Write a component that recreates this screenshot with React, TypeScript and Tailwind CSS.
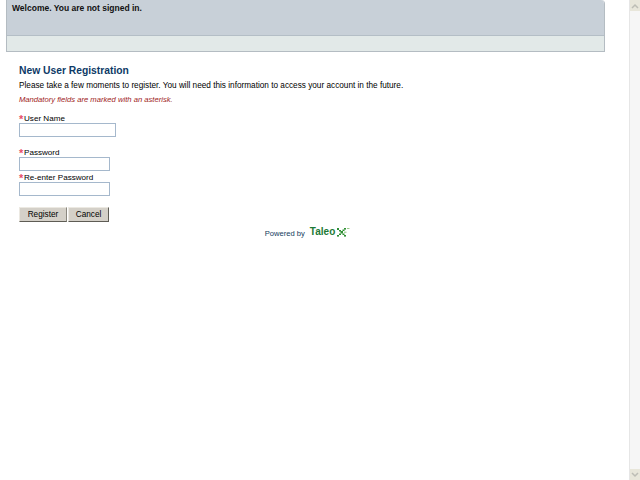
export default function App() {
  const input = "block h-[14px] border border-[#a5b8cc] bg-white";
  const label = "flex h-[10px] items-center pt-[2px] text-[8.1px] leading-[10px]";
  const star = <span className="inline-block w-[5px] text-[11px] font-bold leading-[8px] text-[#e8506a]">*</span>;
  return (
    <div className="flex h-[480px] w-[640px] overflow-hidden bg-white font-['Liberation_Sans',Arial,sans-serif] text-[8.23px] leading-[11px] text-black">
      <main className="w-[629px] pl-[6px]">
        <header className="w-[599px] border-x border-b border-[#b4bcc2] rounded-tr-[4px] overflow-hidden">
          <div className="h-[36px] border-b border-[#b4bec6] bg-[#c8d0d8] pl-[5px] pt-[3px] text-[8.5px] font-bold leading-[11px] text-[#111]">
            Welcome. You are not signed in.
          </div>
          <div className="h-[15px] bg-[#e2e9e8]" />
        </header>
        <section className="pl-[13px] pt-[12px]">
          <h1 className="text-[10.3px] font-bold leading-[13px] text-[#0d3a66]">New User Registration</h1>
          <p className="mt-[3px]">Please take a few moments to register. You will need this information to access your account in the future.</p>
          <p className="mt-[3px] text-[7.65px] italic text-[#a01c1c]">Mandatory fields are marked with an asterisk.</p>
          <div className={`mt-[8px] ${label}`}>{star}User Name</div>
          <div className={`${input} w-[97px]`} />
          <div className={`mt-[10px] ${label}`}>{star}Password</div>
          <div className={`${input} w-[91px]`} />
          <div className={`mt-[1px] ${label}`}>{star}Re-enter Password</div>
          <div className={`${input} w-[91px]`} />
          <div className="mt-[11px] flex gap-px">
            <button className="h-[15px] w-[48px] border border-[#ece9e2] border-r-[#8a877e] border-b-[#5e5c54] bg-[#d4d0c8] text-[8.23px] leading-[11px]">Register</button>
            <button className="h-[15px] w-[41px] border border-[#ece9e2] border-b-[#5e5c54] border-r-[#5e5c54] bg-[#d4d0c8] text-[8.23px] leading-[11px]">Cancel</button>
          </div>
          <div className="mt-[4px] flex w-[577px] items-center justify-center gap-[5px]">
            <span className="text-[7.6px] text-[#123c5c]">Powered by</span>
            <span className="mb-[3px] flex items-center text-[10px] font-bold leading-[11px] text-[#1d7a35]">
              Taleo
              <svg width="14" height="10" viewBox="0 0 14 10" className="ml-[1px]">
                <g fill="#2f8f35">
                  <rect x="1" y="1" width="2" height="2" />
                  <rect x="3" y="3" width="2" height="1.5" />
                  <rect x="4.5" y="4" width="2.5" height="2.5" />
                  <rect x="6.5" y="6.5" width="2" height="1.5" />
                  <rect x="8" y="8" width="2" height="1.6" />
                  <rect x="6.5" y="2.5" width="2" height="1.5" />
                  <rect x="8" y="1" width="2" height="1.6" />
                  <rect x="3" y="6.5" width="2" height="1.5" />
                  <rect x="1" y="8" width="2" height="1.6" />
                </g>
                <path d="M8 5.2h2.5" stroke="#8cc47e" strokeWidth="1" />
                <path d="M11 1.5h2.5" stroke="#9acb8a" strokeWidth="1" />
              </svg>
            </span>
          </div>
        </section>
      </main>
      <aside className="flex w-[11px] flex-col justify-between border-l border-[#e6e6e6] bg-[#f6f6f6]">
        <div className="flex h-[11px] items-center justify-center bg-[#e8e6da]">
          <svg width="8" height="6" viewBox="0 0 8 6"><path d="M1 5l3-3 3 3" fill="none" stroke="#bdbdb5" strokeWidth="1.5" /></svg>
        </div>
        <div className="flex h-[11px] items-center justify-center bg-[#e8e6da]">
          <svg width="8" height="6" viewBox="0 0 8 6"><path d="M1 1l3 3 3-3" fill="none" stroke="#bdbdb5" strokeWidth="1.5" /></svg>
        </div>
      </aside>
    </div>
  );
}
